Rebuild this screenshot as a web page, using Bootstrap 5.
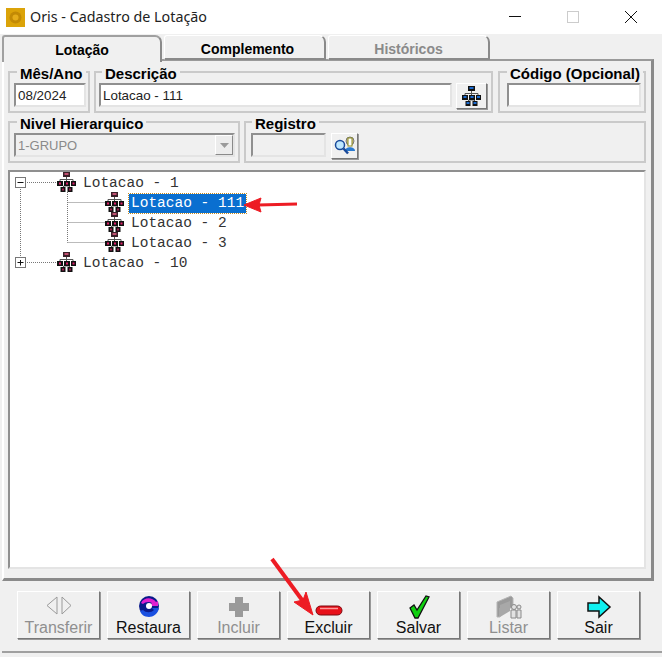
<!DOCTYPE html>
<html lang="pt-BR">
<head>
    <meta charset="UTF-8">
    <title>Oris - Cadastro de Lotação</title>
    <link href="https://cdn.jsdelivr.net/npm/bootstrap@5.3.0/dist/css/bootstrap.min.css" rel="stylesheet">
    <style>
        body {
            background: #f0f0f0;
            width: 662px;
            height: 657px;
            overflow: hidden;
            position: relative;
            font-family: "Liberation Sans", Arial, sans-serif;
            color: #000;
        }
        .title-bar {
            height: 34px;
            background: #fff;
            padding-left: 6px;
            font-family: "Noto Sans", sans-serif;
            font-size: 14.3px;
            color: #222;
        }
        .app-icon { width: 19px; height: 19px; margin-right: 5px; }
        .win-btn { width: 58px; height: 34px; }
        .win-btns { margin-right: 2px; }

        .tab-row { padding-left: 2px; height: 26px; margin-top: 1px; gap: 2px; border: 0; }
        .tab-row .nav-link {
            width: 162px;
            height: 25px;
            padding: 3px 0 0;
            text-align: center;
            font-weight: bold;
            font-size: 14px;
            color: #000;
            background: #f0f0f0;
            border: 1px solid #fff;
            border-right: 2px solid #8a8a8a;
            border-bottom: 2px solid #8a8a8a;
            border-radius: 3px 7px 0 0;
        }
        .tab-row .nav-link.disabled { color: #8a8a8a; }
        .tab-row .nav-link.tab-mid { padding-left: 6px; }
        .tab-row .nav-link.active {
            width: 160px;
            height: 27px;
            padding-top: 3px;
            border-bottom: 0;
            border-left: 2px solid #a0a0a0;
            border-top: 2px solid #a0a0a0;
            position: relative;
            z-index: 2;
        }
        .tab-panel {
            margin: -2px 8px 0 2px;
            width: 652px;
            height: 522px;
            padding: 2px 5px 0 4px;
            border: 2px solid #a0a0a0;
            border-top-color: #9a9a9a;
            border-right: 3px solid #8a8a8a;
            border-bottom: 3px solid #8a8a8a;
            border-left-color: #fff;
        }
        .row-top { height: 50px; }
        .row-low { height: 57px; }
        .field-box {
            height: 50px;
            border: 2px solid #cacaca;
            padding: 2px 0 0;
            min-width: 0;
            margin: 0;
        }
        .field-box legend {
            float: none;
            width: auto;
            font-size: 15px;
            font-weight: bold;
            line-height: 14px;
            white-space: nowrap;
            padding: 4px 3px 0;
            margin: 0 0 0 3px;
        }
        .w-mes { width: 82px; margin-right: 4px; padding-left: 4px; padding-right: 2px; }
        .w-desc { width: 399px; margin-right: 5px; padding-left: 3px; padding-right: 4px; }
        .w-cod { width: 148px; padding-left: 7px; padding-right: 3px; }
        .w-niv { width: 232px; margin-right: 4px; padding-left: 4px; padding-right: 3px; }
        .w-reg { width: 402px; padding-left: 5px; }
        .w-cod legend { margin-left: 0; }
        .w-reg legend { margin-left: 1px; }
        .sunken {
            height: 24px;
            background: #fff;
            border: 2px solid #8f8f8f;
            border-right-color: #e4e4e4;
            border-bottom-color: #e4e4e4;
            font-size: 13.4px;
            line-height: 22px;
            padding-left: 2px;
            color: #222;
        }
        .sunken.off { background: #f0f0f0; color: #8a8a8a; font-size: 13px; }
        .reg-input { width: 75px; margin-right: 5px; }
        .tool-btn {
            width: 31px;
            height: 26px;
            padding: 0;
            background: #f0f0f0;
            border: 1px solid;
            border-color: #fff #777 #777 #fff;
            border-radius: 0;
            box-shadow: 1px 1px 0 #999;
        }
        .tool-btn:hover { background: #f0f0f0; border-color: #fff #777 #777 #fff; }
        .reg-btn { width: 27px; }
        .combo-arrow {
            width: 18px;
            height: 20px;
            background: #ececec;
            border: 1px solid;
            border-color: #fff #8a8a8a #8a8a8a #fff;
        }

        .tree-box {
            height: 399px;
            background: #fff;
            border: 2px solid #8f8f8f;
            border-right-color: #e4e4e4;
            border-bottom-color: #e4e4e4;
            position: relative;
            font-family: "Liberation Mono", "Courier New", monospace;
            font-size: 14.5px;
            color: #333;
        }
        .tree-lines { position: absolute; left: 0; top: 0; }
        .tree-item { height: 20px; }
        .lvl-1 { padding-left: 47px; }
        .lvl-2 { padding-left: 95px; }
        .tree-icon { width: 19px; height: 20px; flex: none; }
        .tree-label { margin: 2px 0 0 5px; padding: 0 2px; line-height: 18px; height: 19px; white-space: pre; }
        .tree-label.sel { background: #0a6fd0; color: #fff; outline: 1px dotted #c58a20; }

        .action-row { padding: 10px 0 0 17px; gap: 7px; }
        .action-btn {
            width: 83px;
            height: 48px;
            padding: 0;
            background: #f0f0f0;
            border: 1px solid;
            border-color: #fff #777 #777 #fff;
            border-radius: 0;
            box-shadow: 1px 1px 0 #999;
            font-size: 16px;
            line-height: 16px;
            color: #111;
        }
        .action-btn:hover { background: #f0f0f0; border-color: #fff #777 #777 #fff; color: #111; }
        .action-btn.off { color: #8f8f8f; }
        .action-icon { height: 24px; width: 34px; display: block; margin: 0 auto 1px; }
        .status-line { position: absolute; left: 2px; right: 0; top: 651px; height: 6px; border-top: 2px solid #a0a0a0; }
        .arrow-mark { position: absolute; left: 0; top: 0; pointer-events: none; }
    </style>
</head>
<body>
    <svg width="0" height="0" class="position-absolute">
        <symbol id="org-dark" viewBox="0 0 19 20">
            <path d="M9.5 5v4M3 9V7.500h13V9M6.500 14v2M12.500 14v2M9.500 12v2H6.500M9.500 14h3" stroke="#555" fill="none"/>
            <rect x="6" y="0" width="7" height="5" fill="#3a2028"/><rect x="7.500" y="1" width="4" height="2" fill="#c05070"/>
            <rect x="0" y="9" width="6" height="5" fill="#111"/><rect x="2" y="10.500" width="2" height="2" fill="#e0206a"/>
            <rect x="7" y="9" width="6" height="5" fill="#111"/><rect x="9" y="10.500" width="2" height="2" fill="#e0206a"/>
            <rect x="14" y="9" width="5" height="5" fill="#111"/><rect x="15.500" y="10.500" width="2" height="2" fill="#e0206a"/>
            <rect x="3.500" y="15" width="5" height="5" fill="#111"/><rect x="5" y="16.500" width="2" height="2" fill="#a02050"/>
            <rect x="10.500" y="15" width="5" height="5" fill="#111"/><rect x="12" y="16.500" width="2" height="2" fill="#a02050"/>
        </symbol>
        <symbol id="org-blue" viewBox="0 0 19 20">
            <path d="M9.500 5v4M3 9V7.500h13V9M6.500 14v2M12.500 14v2M9.500 12v2H6.500M9.500 14h3" stroke="#555" fill="none"/>
            <rect x="6" y="0" width="7" height="5" fill="#111"/><rect x="7.500" y="1" width="4" height="2" fill="#1a6ad0"/>
            <rect x="0" y="9" width="6" height="5" fill="#111"/><rect x="1.500" y="10" width="3" height="2" fill="#1a6ad0"/>
            <rect x="7" y="9" width="6" height="5" fill="#111"/><rect x="8.500" y="10" width="3" height="2" fill="#1a6ad0"/>
            <rect x="14" y="9" width="5" height="5" fill="#111"/><rect x="15" y="10" width="3" height="2" fill="#1a6ad0"/>
            <rect x="3.500" y="15" width="5" height="5" fill="#111"/><rect x="4.500" y="16" width="3" height="2" fill="#1a6ad0"/>
            <rect x="10.500" y="15" width="5" height="5" fill="#111"/><rect x="11.500" y="16" width="3" height="2" fill="#1a6ad0"/>
        </symbol>
    </svg>

    <div class="title-bar d-flex align-items-center">
        <svg class="app-icon" viewBox="0 0 19 19">
            <rect width="19" height="19" fill="#dba309"/>
            <circle cx="9.500" cy="9.500" r="6" fill="#c28a05"/>
            <circle cx="9.500" cy="9.500" r="3" fill="#e5ad1a"/>
        </svg>
        <span>Oris - Cadastro de Lotação</span>
        <div class="win-btns ms-auto d-flex">
            <div class="win-btn d-flex align-items-center justify-content-center">
                <svg width="12" height="12" viewBox="0 0 12 12"><path d="M0 5.500h12" stroke="#111"/></svg>
            </div>
            <div class="win-btn d-flex align-items-center justify-content-center">
                <svg width="12" height="12" viewBox="0 0 12 12"><rect x="0.500" y="0.500" width="11" height="11" fill="none" stroke="#ccc"/></svg>
            </div>
            <div class="win-btn d-flex align-items-center justify-content-center">
                <svg width="12" height="12" viewBox="0 0 12 12"><path d="M0 0l12 12M12 0L0 12" stroke="#111"/></svg>
            </div>
        </div>
    </div>

    <ul class="nav tab-row d-flex">
        <li class="nav-item"><a class="nav-link active" href="#">Lotação</a></li>
        <li class="nav-item"><a class="nav-link tab-mid" href="#">Complemento</a></li>
        <li class="nav-item"><a class="nav-link disabled" href="#">Históricos</a></li>
    </ul>

    <div class="tab-panel">
        <div class="row-top d-flex">
            <fieldset class="field-box w-mes">
                <legend>Mês/Ano</legend>
                <div class="sunken">08/2024</div>
            </fieldset>
            <fieldset class="field-box w-desc">
                <legend>Descrição</legend>
                <div class="d-flex gap-1">
                    <div class="sunken flex-grow-1">Lotacao - 111</div>
                    <button class="btn tool-btn d-flex align-items-center justify-content-center" type="button">
                        <svg width="19" height="20"><use href="#org-blue"/></svg>
                    </button>
                </div>
            </fieldset>
            <fieldset class="field-box w-cod">
                <legend>Código (Opcional)</legend>
                <div class="sunken"></div>
            </fieldset>
        </div>
        <div class="row-low d-flex">
            <fieldset class="field-box w-niv">
                <legend>Nivel Hierarquico</legend>
                <div class="sunken off d-flex justify-content-between">
                    <span>1-GRUPO</span>
                    <span class="combo-arrow d-flex align-items-center justify-content-center">
                        <svg width="9" height="5"><path d="M0 0h9L4.500 5z" fill="#9a9a9a"/></svg>
                    </span>
                </div>
            </fieldset>
            <fieldset class="field-box w-reg">
                <legend>Registro</legend>
                <div class="d-flex">
                    <div class="sunken off reg-input"></div>
                    <button class="btn tool-btn reg-btn d-flex align-items-center justify-content-center" type="button">
                        <svg width="24" height="22" viewBox="0 0 24 22">
                            <circle cx="17" cy="6" r="4" fill="#d8c88a" stroke="#777"/>
                            <path d="M12 16c0-5 10-5 10 0z" fill="#2a7ad0"/>
                            <rect x="15" y="3" width="4" height="8" fill="#fff" stroke="#8a8a20"/>
                            <circle cx="7" cy="10" r="4.500" fill="#bfe8ff" stroke="#1a4a9a" stroke-width="1.500"/>
                            <path d="M10.500 13.500L15 18.500" stroke="#1a4a9a" stroke-width="2.500"/>
                        </svg>
                    </button>
                </div>
            </fieldset>
        </div>

        <div class="tree-box">
            <svg class="tree-lines" width="120" height="110">
                <g fill="none" stroke="#777" stroke-dasharray="1 1">
                    <path d="M10.500 15V85M15 10.500H47M15 90.500H47"/>
                    <path d="M57.500 20V70.500M57.500 30.500H95M57.500 50.500H95M57.500 70.500H95"/>
                </g>
                <g fill="#fff" stroke="#777">
                    <rect x="5.500" y="5.500" width="10" height="10"/>
                    <rect x="5.500" y="85.500" width="10" height="10"/>
                </g>
                <path d="M7.500 10.500h6M7.500 90.500h6M10.500 88v5.500" stroke="#111" fill="none"/>
            </svg>
            <div class="position-relative">
                <div class="tree-item lvl-1 d-flex align-items-center"><svg class="tree-icon"><use href="#org-dark"/></svg><span class="tree-label">Lotacao - 1</span></div>
                <div class="tree-item lvl-2 d-flex align-items-center"><svg class="tree-icon"><use href="#org-dark"/></svg><span class="tree-label sel">Lotacao - 111</span></div>
                <div class="tree-item lvl-2 d-flex align-items-center"><svg class="tree-icon"><use href="#org-dark"/></svg><span class="tree-label">Lotacao - 2</span></div>
                <div class="tree-item lvl-2 d-flex align-items-center"><svg class="tree-icon"><use href="#org-dark"/></svg><span class="tree-label">Lotacao - 3</span></div>
                <div class="tree-item lvl-1 d-flex align-items-center"><svg class="tree-icon"><use href="#org-dark"/></svg><span class="tree-label">Lotacao - 10</span></div>
            </div>
        </div>
    </div>

    <div class="action-row d-flex">
        <button class="btn action-btn off" type="button">
            <svg class="action-icon" viewBox="0 0 34 24"><path d="M15 2v17L5 10.500zM20 2v17l9-8.500z" fill="#f0f0f0" stroke="#9a9a9a"/></svg>
            Transferir
        </button>
        <button class="btn action-btn" type="button">
            <svg class="action-icon" viewBox="0 0 34 24">
                <circle cx="17" cy="11" r="10" fill="#0a1a8a"/>
                <path d="M9 8c3-6 11-6 15-1l2-1v5h-9l3-3c-3-2-7-1-9 1z" fill="#e020d0"/>
                <path d="M11 15c3 3 8 3 11 0l-2-2h7c-1 6-6 9-10 9-5 0-8-3-9-6z" fill="#1a50e0"/>
                <circle cx="17" cy="11" r="3" fill="#fff"/>
            </svg>
            Restaura
        </button>
        <button class="btn action-btn off" type="button">
            <svg class="action-icon" viewBox="0 0 34 24"><path d="M13 2h8v6h6v8h-6v6h-8v-6H7V8h6z" fill="#9a9a9a"/></svg>
            Incluir
        </button>
        <button class="btn action-btn" type="button">
            <svg class="action-icon" viewBox="0 0 34 24"><rect x="4" y="11" width="26" height="9" rx="4.500" fill="#e8101a" stroke="#7a0a10"/><path d="M8 13.500h18" stroke="#ff9a9a" stroke-width="1.500"/></svg>
            Excluir
        </button>
        <button class="btn action-btn" type="button">
            <svg class="action-icon" viewBox="0 0 34 24"><path d="M8 13l4-3 3 5L24 1l3 1-11 21h-3z" fill="#10d010" stroke="#111" stroke-width="1.300"/></svg>
            Salvar
        </button>
        <button class="btn action-btn off" type="button">
            <svg class="action-icon" viewBox="0 0 34 24">
                <path d="M5 7L19 1l2 2v10H8v9H5z" fill="#9a9a9a" stroke="#b5b5b5"/>
                <path d="M8 22V10l10-4v10" fill="#a8a8a8"/>
                <circle cx="22" cy="12" r="2.500" fill="#e2e2e2" stroke="#8a8a8a"/>
                <circle cx="27" cy="12" r="2" fill="#e2e2e2" stroke="#8a8a8a"/>
                <path d="M19 23v-8h5v8zM25 23v-8h4v8z" fill="#e2e2e2" stroke="#8a8a8a"/>
            </svg>
            Listar
        </button>
        <button class="btn action-btn" type="button">
            <svg class="action-icon" viewBox="0 0 34 24"><path d="M6 8h11V2l11 10-11 10v-6H6z" fill="#10f0f0" stroke="#111" stroke-width="1.500"/></svg>
            Sair
        </button>
    </div>

    <div class="status-line"></div>

    <svg class="arrow-mark" width="662" height="657">
        <g fill="#ed1c24" stroke="#ed1c24">
            <path d="M297 204L258 205" stroke-width="3" fill="none"/>
            <path d="M244 205L261 198L259 205L261 212z"/>
            <path d="M272 559L305 604" stroke-width="4" fill="none"/>
            <path d="M313 615L294 602L303 600L306 592z"/>
        </g>
    </svg>
</body>
</html>
